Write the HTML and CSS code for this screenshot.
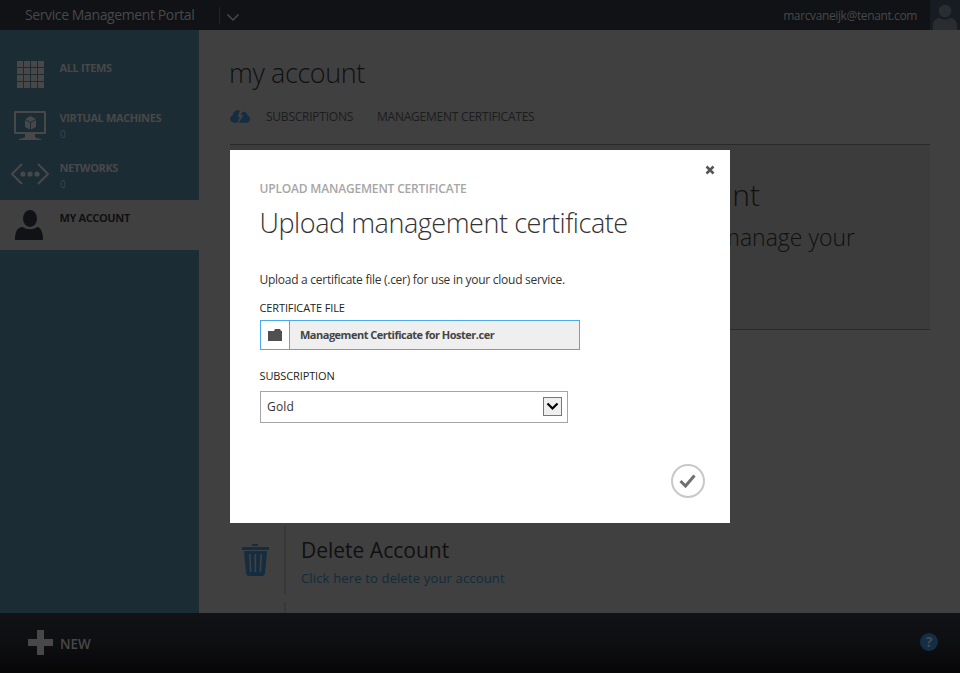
FILE: index.html
```html
<!DOCTYPE html>
<html lang="en">
<head>
<meta charset="utf-8">
<title>Service Management Portal</title>
<link rel="stylesheet" href="styles.css">
</head>
<body>
<div class="portal">
  <header class="topbar">
    <span class="brand">Service Management Portal</span>
    <span class="topbar-divider"></span>
    <svg class="chevron" width="14" height="9" viewBox="0 0 14 9"><path d="M1.500 1.500 7 7l5.500-5.500" fill="none" stroke="#484848" stroke-width="1.500"/></svg>
    <span class="user">marcvaneijk@tenant.com</span>
    <svg class="avatar" width="30" height="30" viewBox="0 0 30 30"><rect width="30" height="30" fill="#171c23"/><path d="M3 30v-5c0-5 4-7 7-7 3 2 7 2 10 0 4 0 7 3 7 7v5z" fill="#2a2d30"/><circle cx="15" cy="11" r="6.300" fill="#2a2d30"/></svg>
  </header>
  <div class="middle">
    <nav class="sidebar">
      <a class="nav-item">
        <svg width="60" height="50" viewBox="0 0 60 50" fill="#484848"><path d="M17 11h6v6h-6zM24 11h6v6h-6zM31 11h6v6h-6zM38 11h6v6h-6zM17 18h6v6h-6zM24 18h6v6h-6zM31 18h6v6h-6zM38 18h6v6h-6zM17 25h6v6h-6zM24 25h6v6h-6zM31 25h6v6h-6zM38 25h6v6h-6zM17 32h6v6h-6zM24 32h6v6h-6zM31 32h6v6h-6zM38 32h6v6h-6z"/></svg>
        <span class="nav-text"><b>ALL ITEMS</b></span>
      </a>
      <a class="nav-item">
        <svg width="60" height="50" viewBox="0 0 60 50" fill="#484848"><path fill-rule="evenodd" d="M15 11h30q1 0 1 1v21q0 1-1 1H15q-1 0-1-1V12q0-1 1-1zm1 2v19h28V13zM25 34h10v3q1 1 6 2v1H19v-1q5-1 6-2z"/><path d="m30.500 16 5.500 3-5.500 3-5.500-3zM25 20l5 2.700v6.800L25 27zM36 20l-5 2.700v6.800l5-2.500z"/></svg>
        <span class="nav-text"><b>VIRTUAL MACHINES</b><i>0</i></span>
      </a>
      <a class="nav-item">
        <svg width="60" height="50" viewBox="0 0 60 50" fill="#484848"><path d="M22 14 12 24l10 10M38 14l10 10-10 10" fill="none" stroke="#484848" stroke-width="2"/><circle cx="23" cy="24" r="2.600"/><circle cx="30" cy="24" r="2.600"/><circle cx="37" cy="24" r="2.600"/></svg>
        <span class="nav-text"><b>NETWORKS</b><i>0</i></span>
      </a>
      <a class="nav-item active">
        <svg width="60" height="50" viewBox="0 0 60 50" fill="#101216"><ellipse cx="30" cy="18.500" rx="7" ry="8.500"/><path d="M15 40c0-8 2-13 8-13 3 3 11 3 14 0 4 0 6 6 6 13z"/></svg>
        <span class="nav-text"><b>MY ACCOUNT</b></span>
      </a>
    </nav>
    <main class="content">
      <h1>my account</h1>
      <div class="tabs">
        <svg width="20" height="13" viewBox="0 0 20 13"><path d="M4 12.800C-1 12.500-.8 6 2.600 5.500 3 1.500 6.500-.8 10 .5L7.500 6.500l2.300.4L7.600 12.800zM8.800 12.800l4.500-7.600-2.600-.5L12.500 2c2.500-.8 4.800.8 5 3.300 3.200 1.400 3.300 6.500-.7 7.500z" fill="#142d41"/></svg>
        <span class="tab t-sub">SUBSCRIPTIONS</span>
        <span class="tab">MANAGEMENT CERTIFICATES</span>
      </div>
      <section class="banner">
        <div class="banner-title">account</div>
        <div class="banner-sub">manage your</div>
      </section>
      <section class="delete-row">
        <svg class="trash" width="28" height="33" viewBox="0 0 28 33"><path fill="#142d41" fill-rule="evenodd" d="M10 0h6v2h-6zM0 3h27v3H0zM2 7h23l-2 22q-.5 3-3 3H7q-2.500 0-3-3zM7 10l.8 18h1.700L8.700 10zM12.500 10v18h1.700V10zM18.300 10l-.8 18h1.700l.8-18z"/></svg>
        <div class="delete-copy"><h2>Delete Account</h2><a>Click here to delete your account</a></div>
      </section>
      <div class="next-row"></div>
    </main>
  </div>
  <footer class="commandbar">
    <svg width="25" height="25" viewBox="0 0 25 25"><path d="M9 0h7v9h9v7h-9v9H9v-9H0V9h9z" fill="#484848"/></svg>
    <span class="new">NEW</span>
    <span class="help">?</span>
  </footer>
</div>

<div class="dialog" role="dialog">
  <svg class="close" width="10" height="10" viewBox="0 0 10 10"><path d="m1.500 1.500 7 7m0-7-7 7" stroke="#555" stroke-width="2.500"/></svg>
  <div class="eyebrow">UPLOAD MANAGEMENT CERTIFICATE</div>
  <div class="dialog-title">Upload management certificate</div>
  <p>Upload a certificate file (.cer) for use in your cloud service.</p>
  <div class="label l-file">CERTIFICATE FILE</div>
  <div class="file">
    <span class="folder"><svg width="14" height="12" viewBox="0 0 14 12"><path d="M0 2h6l1-2h5l1 2h1v10H0z" fill="#505050"/></svg></span>
    <span class="filename">Management Certificate for Hoster.cer</span>
  </div>
  <div class="label l-sub">SUBSCRIPTION</div>
  <div class="select">
    <span>Gold</span>
    <span class="drop"><svg width="13" height="9" viewBox="0 0 13 9"><path d="m1.500 1.500 5 5 5-5" fill="none" stroke="#000" stroke-width="2.200"/></svg></span>
  </div>
  <svg class="confirm" width="34" height="34" viewBox="0 0 34 34"><circle cx="17" cy="17" r="16" fill="none" stroke="#c8c8c8" stroke-width="2"/><path d="m9.500 17 5 5 9-10.500" fill="none" stroke="#707070" stroke-width="3"/></svg>
</div>
</body>
</html>
```
FILE: styles.css
```css
* { box-sizing: border-box; }
body { margin: 0; font-family: "Open Sans", "Noto Sans", sans-serif; font-size: 12px; white-space: nowrap; }
svg { display: block; flex: none; }
h1, h2, p { margin: 0; font-weight: 400; }
.portal { width: 960px; height: 673px; display: flex; flex-direction: column; overflow: hidden; background: #404040; }

.topbar { height: 30px; flex: none; background: #101216; display: flex; align-items: center; color: #484848; }
.brand { margin-left: 25px; width: 194px; font-size: 14px; line-height: 30px; letter-spacing: -0.39px; }
.topbar-divider { width: 1px; height: 17px; background: #202226; }
.chevron { margin: 4px 0 0 6px; }
.user { margin-left: auto; margin-right: 13px; font-size: 12px; line-height: 30px; padding-top: 1px; letter-spacing: -0.38px; }

.middle { flex: 1; display: flex; min-height: 0; }
.sidebar { width: 199px; background: #1c2c34; padding-top: 20px; color: #484848; }
.nav-item { height: 50px; display: flex; }
.nav-text { padding-top: 10px; display: flex; flex-direction: column; }
.nav-text b { font-size: 11px; line-height: 16px; letter-spacing: -0.37px; margin-left: -0.5px; align-self: flex-start; }
.nav-text i { font-style: normal; font-size: 10px; line-height: 17px; color: #37474f; }
.nav-item.active { background: #404040; color: #101010; }

.content { flex: 1; padding: 0 30px 0 31px; }
h1 { font-size: 27px; font-weight: 300; line-height: 40px; margin-top: 23px; margin-left: -1px; letter-spacing: -0.4px; color: #101010; }
.tabs { display: flex; align-items: center; height: 20px; margin-top: 13px; color: #1c1c1c; font-size: 12px; letter-spacing: -0.23px; }
.tab { line-height: 20px; padding-top: 2px; }
.t-sub { margin-left: 16px; width: 111px; }
.banner { margin-top: 18px; height: 186px; background: #3c3c3c; border-top: 1px solid #2a2a2a; border-bottom: 1px solid #2a2a2a; color: #101010; font-weight: 300; text-align: right; }
.banner-title { font-size: 30px; line-height: 40px; margin: 30px 170px 0 0; }
.banner-sub { font-size: 23px; line-height: 34px; margin: 5px 75px 0 0; }
.delete-row { margin-top: 196px; height: 68px; display: flex; }
.trash { margin: 18px 14px 0 12px; }
.delete-copy { border-left: 2px solid #393939; padding-left: 15px; }
h2 { font-size: 21px; line-height: 30px; margin-top: 9px; color: #101010; }
.delete-copy a { display: block; font-size: 13px; line-height: 20px; margin-top: 3px; letter-spacing: 0.16px; color: #102c3c; }
.next-row { margin: 8px 0 0 54px; height: 11px; border-left: 2px solid #393939; }

.commandbar { height: 60px; flex: none; background: linear-gradient(#101216, #0e0f11 50%, #060607); display: flex; align-items: center; padding: 0 22px 1px 28px; color: #484848; }
.new { margin-left: 7px; font-size: 13.500px; font-weight: 600; padding-top: 3px; }
.help { margin-left: auto; margin-top: -1px; width: 18px; height: 18px; border-radius: 50%; background: #142f45; color: #484848; font-size: 14px; font-weight: 700; line-height: 18px; text-align: center; }

.dialog { position: absolute; left: 230px; top: 150px; width: 500px; height: 373px; background: #fff; padding: 30px 30px 30px 29.500px; color: #333; display: flex; flex-direction: column; align-items: flex-start; }
.close { position: absolute; right: 15px; top: 15px; }
.eyebrow { font-size: 12px; font-weight: 600; line-height: 18px; letter-spacing: -0.18px; color: #a6a6a6; }
.dialog-title { font-size: 27px; font-weight: 300; line-height: 40px; margin-top: 5px; letter-spacing: -0.45px; }
.dialog p { font-size: 12px; line-height: 18px; margin-top: 28px; letter-spacing: -0.27px; }
.label { font-size: 11px; line-height: 16px; color: #222; font-weight: 500; letter-spacing: -0.12px; }
.l-file { margin-top: 11px; }
.file { display: flex; width: 320px; height: 30px; margin: 4px 0 0 0.5px; border: 1px solid #4baaeb; background: #efefef; }
.folder { width: 29px; background: #fff; border-right: 1px solid #4baaeb; display: flex; align-items: center; justify-content: center; }
.filename { margin-left: 10px; font-size: 11px; line-height: 28px; font-weight: 700; letter-spacing: -0.5px; color: #444; }
.l-sub { margin-top: 18px; }
.select { width: 308px; height: 32px; margin: 7px 0 0 0.5px; border: 1px solid #a5a5a5; display: flex; align-items: center; justify-content: space-between; padding: 0 5px 2px 6px; font-size: 12px; letter-spacing: 0.2px; }
.drop { width: 19px; height: 19px; border: 1px solid #777; background: #efefef; display: flex; align-items: center; justify-content: center; }
.confirm { position: absolute; right: 25px; bottom: 25px; }
```
